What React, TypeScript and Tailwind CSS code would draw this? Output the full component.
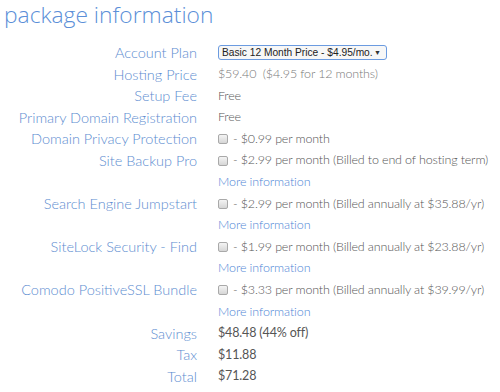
import React from 'react';

type Row = {
    label: string;
    value?: React.ReactNode;
    more?: boolean;
    strong?: boolean;
};

const Check: React.FC = () => (
    <span className="inline-block w-[10px] h-[10px] mr-[5px] rounded-[2px] border border-[#a9a9a9] bg-gradient-to-b from-[#f4f4f4] to-[#d6d6d6] align-[-1px]" />
);

const rows: Row[] = [
    { label: 'Hosting Price', value: <span className="text-[#7a7a7a]">$59.40&nbsp; ($4.95 for 12 months)</span> },
    { label: 'Setup Fee', value: 'Free' },
    { label: 'Primary Domain Registration', value: 'Free' },
    { label: 'Domain Privacy Protection', value: <><Check />- $0.99 per month</> },
    { label: 'Site Backup Pro', value: <><Check />- $2.99 per month (Billed to end of hosting term)</>, more: true },
    { label: 'Search Engine Jumpstart', value: <><Check />- $2.99 per month (Billed annually at $35.88/yr)</>, more: true },
    { label: 'SiteLock Security - Find', value: <><Check />- $1.99 per month (Billed annually at $23.88/yr)</>, more: true },
    { label: 'Comodo PositiveSSL Bundle', value: <><Check />- $3.33 per month (Billed annually at $39.99/yr)</>, more: true },
    { label: 'Savings', value: '$48.48 (44% off)', strong: true },
    { label: 'Tax', value: '$11.88', strong: true },
    { label: 'Total', value: '$71.28', strong: true },
];

const App: React.FC = () => {
    return (
        <div className="w-[500px] h-[392px] bg-white overflow-hidden font-['Lato',sans-serif]">
            <h1 className="pl-[4px] h-[42px] text-[22.8px] leading-[30px] font-light text-[#5b8fd8] font-['Open_Sans',sans-serif]">
                package information
            </h1>

            <div className="grid grid-cols-[197px_1fr] gap-x-[21px] font-light">
                {/* Account plan select */}
                <div className="h-[21.6px] flex items-center justify-end text-[14.5px] text-[#5d8dd0]">Account Plan</div>
                <div className="h-[21.6px] flex items-center">
                    <div className="flex items-center justify-between w-[169px] h-[15px] pl-[3px] pr-[5px] border border-[#6b9be0] rounded-[3px] bg-[#f7f7f7] text-[10.2px] leading-none font-normal text-[#222] whitespace-nowrap overflow-hidden font-['Liberation_Sans',sans-serif]">
                        <span>Basic 12 Month Price - $4.95/mo.</span>
                        <span className="text-[7px] text-[#333]">▼</span>
                    </div>
                </div>

                {rows.map((row) => (
                    <React.Fragment key={row.label}>
                        <div className="h-[21.6px] flex items-center justify-end text-[14.5px] text-[#5d8dd0] whitespace-nowrap">{row.label}</div>
                        <div className={`h-[21.6px] flex items-center text-[12.5px] tracking-[-0.15px] text-[#555] whitespace-nowrap ${row.strong ? 'font-normal' : ''}`}>{row.value}</div>
                        {row.more && (
                            <>
                                <div className="h-[21.6px]" />
                                <div className="h-[21.6px] flex items-center text-[12.5px] tracking-[-0.1px] text-[#4f86d6]">More information</div>
                            </>
                        )}
                    </React.Fragment>
                ))}
            </div>
        </div>
    );
};

export default App;
